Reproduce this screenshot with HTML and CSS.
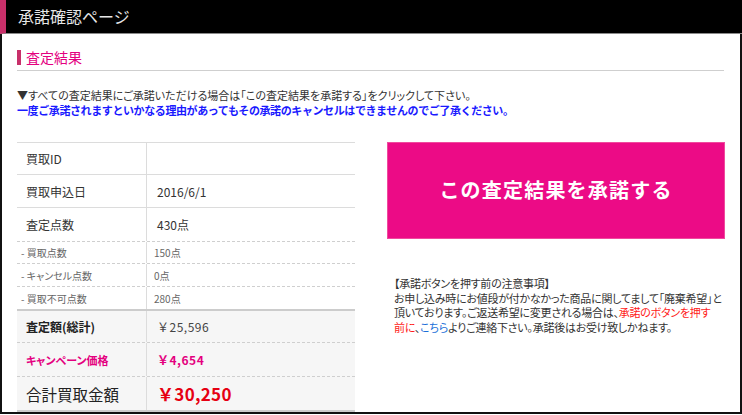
FILE: index.html
```html
<!DOCTYPE html>
<html lang="ja">
<head>
<meta charset="utf-8">
<title>承諾確認ページ</title>
<link rel="stylesheet" href="styles.css">
</head>
<body>
<div class="page">
  <header class="topbar"><h1 class="topbar-title">承諾確認ページ</h1></header>
  <main class="frame">
    <h2 class="section-title"><span class="section-title-text">査定結果</span></h2>
    <p class="lead">▼すべての査定結果にご承諾いただける場合は「この査定結果を承諾する」をクリックして下さい。</p>
    <p class="warn">一度ご承諾されますといかなる理由があってもその承諾のキャンセルはできませんのでご了承ください。</p>
    <div class="columns">
      <div class="result">
        <div class="row r1"><div class="label">買取ID</div><div class="value"></div></div>
        <div class="row r2"><div class="label">買取申込日</div><div class="value">2016/6/1</div></div>
        <div class="row r3"><div class="label">査定点数</div><div class="value">430点</div></div>
        <div class="row sub"><div class="label">- 買取点数</div><div class="value">150点</div></div>
        <div class="row sub"><div class="label">- キャンセル点数</div><div class="value">0点</div></div>
        <div class="row sub"><div class="label">- 買取不可点数</div><div class="value">280点</div></div>
        <div class="row total"><div class="label">査定額(総計)</div><div class="value">￥25,596</div></div>
        <div class="row campaign"><div class="label">キャンペーン価格</div><div class="value">￥4,654</div></div>
        <div class="row grand"><div class="label">合計買取金額</div><div class="value">￥30,250</div></div>
      </div>
      <div class="side">
        <button class="accept" type="button">この査定結果を承諾する</button>
        <div class="notes">
          <p class="notes-line">【承諾ボタンを押す前の注意事項】</p>
          <p class="notes-line">お申し込み時にお値段が付かなかった商品に関してまして「廃棄希望」と</p>
          <p class="notes-line">頂いております。ご返送希望に変更される場合は、<span class="red">承諾のボタンを押す</span></p>
          <p class="notes-line"><span class="red">前に</span>、<span class="blue">こちら</span>よりご連絡下さい。承諾後はお受け致しかねます。</p>
        </div>
      </div>
    </div>
  </main>
</div>
</body>
</html>
```
FILE: styles.css
```css
* { box-sizing: border-box; }
html, body { margin: 0; padding: 0; background: #fff; }
body {
  font-family: "Noto Sans CJK JP", "Liberation Sans", sans-serif;
  color: #333;
}
p, h1, h2 { margin: 0; }
.page { width: 742px; height: 414px; overflow: hidden; }

.topbar {
  height: 34px;
  background: #000;
  border-left: 6px solid #c8306a;
  border-bottom: 1px solid #8a8a8a;
  padding-left: 12px;
  display: flex;
  align-items: center;
}
.topbar-title {
  font-size: 16px;
  font-weight: normal;
  color: #e6e6e6;
  line-height: 1;
  padding-bottom: 2px;
}

.frame {
  height: 380px;
  border: 2px solid #111;
  border-top: none;
  padding: 0 15px;
  overflow: hidden;
}

.section-title {
  margin-top: 16px;
  padding-bottom: 5px;
  border-bottom: 1px solid #cfcfcf;
  margin-right: 1px;
  font-size: 14px;
  font-weight: normal;
  line-height: 15px;
  color: #e4007f;
  font-feature-settings: "palt";
}
.section-title-text {
  display: block;
  border-left: 4px solid #c8306a;
  padding-left: 5px;
}

.lead {
  margin-top: 17px;
  font-size: 11px;
  line-height: 15px;
  color: #333;
  font-feature-settings: "palt";
}
.warn {
  font-size: 11px;
  line-height: 15px;
  color: #1a1aff;
  font-weight: bold;
  letter-spacing: -0.4px;
}

.columns {
  margin-top: 24px;
  display: flex;
  gap: 32px;
}
.result { width: 338px; }
.row {
  display: flex;
  border-top: 1px solid #dcdcdc;
  font-size: 12px;
}
.label {
  width: 130px;
  border-right: 1px solid #dcdcdc;
  padding-left: 9px;
  display: flex;
  align-items: center;
  font-feature-settings: "palt";
}
.value {
  flex: 1;
  padding-left: 10px;
  display: flex;
  align-items: center;
}
.r1 { height: 32px; }
.r2 { height: 33px; }
.r3 { height: 34px; }
.sub {
  height: 23px;
  border-top: 1px dashed #cfcfcf;
  font-size: 10px;
  color: #666;
}
.sub:nth-child(4) { height: 22px; }
.sub .label { padding-left: 4px; }
.sub .value { padding-left: 7px; }
.total, .campaign, .grand { background: #f6f6f6; }
.total {
  height: 33px;
  border-top: 2px solid #cccccc;
}
.total .label { font-weight: bold; color: #222; }
.total .value { letter-spacing: 0.5px; color: #444; }
.campaign {
  height: 34px;
  border-top: 1px dashed #cfcfcf;
  color: #e4007f;
  font-weight: bold;
  font-size: 11px;
}
.campaign .value { font-size: 12px; letter-spacing: 0.5px; }
.grand {
  height: 36px;
  border-top: 1px dashed #cfcfcf;
  border-bottom: 2px solid #cccccc;
  font-size: 15.5px;
  color: #222;
}
.grand .value {
  color: #e60012;
  font-weight: bold;
  font-size: 17px;
  letter-spacing: 0.3px;
}

.side { width: 338px; }
.accept {
  display: flex;
  align-items: center;
  justify-content: center;
  width: 338px;
  height: 97px;
  background: #ec0b86;
  border: 1px solid #f04a9e;
  color: #fff;
  font-family: "Noto Sans CJK JP", "Liberation Sans", sans-serif;
  font-size: 20px;
  font-weight: bold;
  letter-spacing: 1.2px;
  padding: 0 0 2px;
  cursor: pointer;
}
.notes {
  margin-top: 37px;
  padding-left: 7px;
  font-size: 11px;
  line-height: 14.5px;
  color: #333;
  font-feature-settings: "palt";
  letter-spacing: -0.25px;
  white-space: nowrap;
}
.red { color: #ff1a1a; }
.blue { color: #1a6fd8; }
```
